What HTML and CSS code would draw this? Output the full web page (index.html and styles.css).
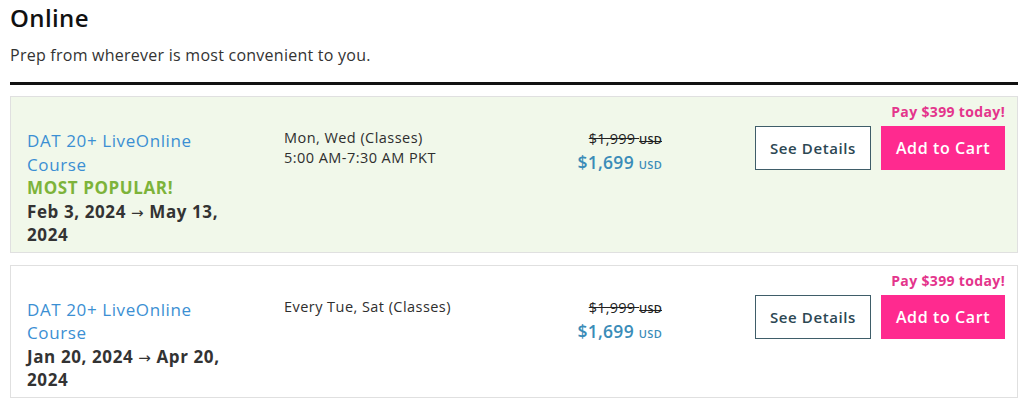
FILE: index.html
```html
<!DOCTYPE html>
<html>
<head>
<meta charset="utf-8">
<link rel="stylesheet" href="styles.css">
</head>
<body>
<div class="page">
  <h1 class="title">Online</h1>
  <p class="subtitle">Prep from wherever is most convenient to you.</p>
  <div class="rule"></div>

  <div class="card card-popular">
    <div class="col-name">
      <a class="course-link"><span>DAT 20+ LiveOnline</span> <span>Course</span></a>
      <div class="popular">MOST POPULAR!</div>
      <div class="dates"><span>Feb 3, 2024</span> <span class="arrow">→</span> <span>May 13,</span> <span>2024</span></div>
    </div>
    <div class="col-schedule">
      <div>Mon, Wed (Classes)</div>
      <div>5:00 AM-7:30 AM PKT</div>
    </div>
    <div class="col-price">
      <div class="old-price"><span class="strike">$1,999 <span class="cur">USD</span></span></div>
      <div class="new-price">$1,699 <span class="cur">USD</span></div>
    </div>
    <div class="col-actions">
      <div class="pay-today">Pay $399 today!</div>
      <div class="buttons">
        <a class="btn btn-outline">See Details</a>
        <a class="btn btn-cart">Add to Cart</a>
      </div>
    </div>
  </div>

  <div class="card">
    <div class="col-name">
      <a class="course-link"><span>DAT 20+ LiveOnline</span> <span>Course</span></a>
      <div class="dates"><span>Jan 20, 2024</span> <span class="arrow">→</span> <span>Apr 20,</span> <span>2024</span></div>
    </div>
    <div class="col-schedule">
      <div>Every Tue, Sat (Classes)</div>
    </div>
    <div class="col-price">
      <div class="old-price"><span class="strike">$1,999 <span class="cur">USD</span></span></div>
      <div class="new-price">$1,699 <span class="cur">USD</span></div>
    </div>
    <div class="col-actions">
      <div class="pay-today">Pay $399 today!</div>
      <div class="buttons">
        <a class="btn btn-outline">See Details</a>
        <a class="btn btn-cart">Add to Cart</a>
      </div>
    </div>
  </div>
</div>
</body>
</html>
```

FILE: styles.css
```css
* { box-sizing: border-box; }
html, body {
  margin: 0;
  padding: 0;
  background: #ffffff;
  font-family: "Open Sans", "Noto Sans", sans-serif;
  color: #2e2e2e;
}
.page {
  padding: 0 6px 0 10px;
}
.title {
  margin: 0;
  padding-top: 2px;
  font-size: 24px;
  font-weight: 600;
  line-height: 32px;
  color: #111;
  letter-spacing: 0.4px;
}
.subtitle {
  margin: 10px 0 0;
  font-size: 16px;
  line-height: 22px;
  color: #333;
  letter-spacing: 0.25px;
}
.rule {
  margin-top: 16px;
  height: 3px;
  background: #111;
}
.card {
  margin-top: 11px;
  border: 1px solid #e0e0e0;
  background: #fff;
  padding: 5px 12px 5px 16px;
  display: grid;
  grid-template-columns: 257px 1fr 120px 343px;
  align-items: start;
}
.card + .card {
  margin-top: 12px;
}
.card-popular {
  background: #f1f8ea;
}
.col-name {
  margin-top: 27px;
  width: 218px;
  font-size: 17px;
  line-height: 23.5px;
  letter-spacing: 0.6px;
}
.course-link {
  color: #3b8fd3;
  display: block;
}
.popular {
  color: #7db33a;
  font-weight: 700;
}
.dates {
  font-weight: 700;
  color: #333;
}
.arrow {
  font-weight: 400;
  font-family: "DejaVu Sans", sans-serif;
  font-size: 15px;
  line-height: 1;
}
.col-schedule {
  margin-top: 26px;
  font-size: 14.5px;
  line-height: 20px;
  color: #2e2e2e;
  letter-spacing: 0.45px;
}
.col-price {
  margin-top: 27px;
  text-align: right;
}
.old-price {
  font-size: 14.5px;
  line-height: 20px;
  color: #222;
  letter-spacing: 0.2px;
}
.strike {
  text-decoration: line-through;
}
.new-price {
  font-size: 17.5px;
  line-height: 24px;
  color: #3a8cb8;
  font-weight: 600;
  letter-spacing: 0.3px;
}
.cur {
  font-size: 11px;
  font-weight: 600;
}
.old-price .cur { color: #222; }
.col-actions {
  display: flex;
  flex-direction: column;
  align-items: flex-end;
}
.pay-today {
  font-size: 14px;
  font-weight: 700;
  line-height: 20px;
  color: #e4358c;
  letter-spacing: 0.35px;
}
.buttons {
  margin-top: 4px;
  display: flex;
  gap: 10px;
}
.btn {
  height: 44px;
  display: flex;
  align-items: center;
  justify-content: center;
  font-weight: 600;
  text-decoration: none;
  letter-spacing: 0.6px;
}
.btn-outline {
  width: 116px;
  border: 1px solid #3f5d69;
  background: #fff;
  color: #2c4753;
  font-size: 15px;
}
.btn-cart {
  width: 124px;
  background: #ff2a8f;
  color: #fff;
  font-size: 16px;
}
```
